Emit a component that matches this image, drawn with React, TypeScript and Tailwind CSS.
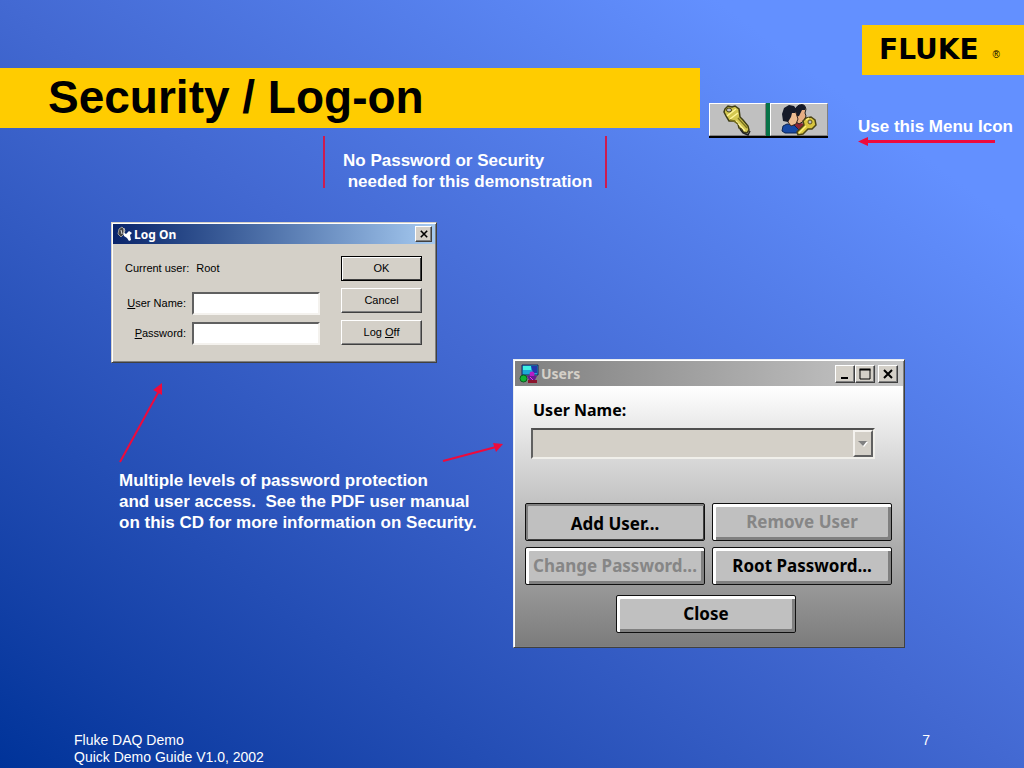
import type { ReactNode } from "react";

function Arrow({ className, viewBox, line, head, width = 2 }: {
  className: string;
  viewBox: string;
  line: string;
  head: string;
  width?: number;
}) {
  return (
    <svg className={className} viewBox={viewBox} fill="none" aria-hidden="true">
      <path d={line} stroke="#ee0a3c" strokeWidth={width} />
      <path d={head} fill="#ee0a3c" />
    </svg>
  );
}

function KeyIcon() {
  return (
    <svg className="w-8 h-8" viewBox="0 0 32 32" aria-hidden="true">
      <path
        d="M3 5L6 2L10 3L13 2L17 5L18 13L21 16L26 22L27 26L25 29L21 28L20 25L17 24L16 20L12 17L7 17L4 12L2 8Z"
        fill="#d3c750"
        stroke="#3e3c14"
        strokeWidth="1.5"
      />
      <path d="M5 12L14 5M8 15L16 9M14 17L23 27" stroke="#fff59a" strokeWidth="1.4" />
      <path d="M16 14L25 24M8 16L12 17L16 20" stroke="#7b731f" strokeWidth="1.4" fill="none" />
      <ellipse cx="7" cy="6" rx="2.500" ry="2" fill="#c0c0c0" stroke="#3e3c14" />
      <path d="M18 25L21 29L26 31L28 27" stroke="#222" fill="none" strokeWidth="1.500" />
    </svg>
  );
}

function UsersKeyIcon() {
  return (
    <svg className="w-9 h-8" viewBox="0 0 36 32" aria-hidden="true">
      <path d="M11 21L17 18L23 20L22 28H11Z" fill="#8c2635" />
      <path d="M14 5L18 1H23L25 5L24 9L25 12L23 17L18 20L14 17Z" fill="#e6ae83" stroke="#222" />
      <path d="M13 7L16 2L21 0L25 3L24 6L21 6L18 12L14 13Z" fill="#151a28" />
      <path d="M1 27L2 22L6 20L13 21L19 27L17 29H4Z" fill="#1749a5" stroke="#0b2457" />
      <path d="M5 9L14 6L16 12L17 15L15 20L10 22L7 18Z" fill="#edbd91" stroke="#3b2820" />
      <path d="M1 10L3 4L8 1L13 2L16 6L14 9L11 9L10 13L7 18L2 17Z" fill="#151a28" />
      <path
        d="M25 14L30 13L34 16L35 21L31 25L27 25L22 30L17 31L16 28L23 21L22 17Z"
        fill="#d9c63e"
        stroke="#4c4515"
        strokeWidth="1.5"
      />
      <circle cx="29" cy="18" r="2" fill="#c0c0c0" stroke="#5d5219" />
      <path d="M18 29L25 22M25 16L28 14" stroke="#fff17c" strokeWidth="1.4" />
    </svg>
  );
}

function KeysTitleIcon() {
  return (
    <svg className="w-4 h-4" viewBox="0 0 16 16" aria-hidden="true">
      <path d="M2 3L5 1L8 4L7 8L4 11L1 8Z" fill="#454545" stroke="#999" />
      <path d="M4 4L5 8M7 2V6" stroke="#ddd" />
      <path d="M6 6L9 8L12 5L15 7L13 9L14 14L12 15L10 12L7 10Z" fill="#fff" />
    </svg>
  );
}

function UsersTitleIcon() {
  return (
    <svg className="w-5 h-5" viewBox="0 0 20 20" aria-hidden="true">
      <path d="M3 1H19V11H3Z" fill="#1ca9d6" stroke="#16215f" />
      <path d="M4 2H12V6H4Z" fill="#3ff0e5" />
      <path d="M12 2H18V9H14Z" fill="#2338ab" />
      <circle cx="4.500" cy="14.500" r="3.500" fill="#12b535" stroke="#075b1c" />
      <circle cx="13" cy="10" r="2.500" fill="#b51ac8" />
      <path d="M8 12H18L16 16H10Z" fill="#681a93" />
      <path d="M9 16H18V19H9Z" fill="#8c142d" />
      <path d="M11 13L14 16" stroke="#ef3bdf" />
    </svg>
  );
}

function CaptionButton({ label, className, children }: {
  label: string;
  className: string;
  children: ReactNode;
}) {
  return (
    <button
      type="button"
      aria-label={label}
      className={`flex items-center justify-center bg-[#d4d0c8] border border-t-white border-l-white border-r-[#404040] border-b-[#404040] shadow-[inset_-1px_-1px_0_#808080] ${className}`}
    >
      {children}
    </button>
  );
}

function CloseGlyph({ className }: { className: string }) {
  return (
    <svg className={className} viewBox="0 0 10 10" aria-hidden="true">
      <path d="M1 1L9 9M9 1L1 9" stroke="#000" strokeWidth="2" />
    </svg>
  );
}

const dialogButton =
  "w-[81px] h-[25px] bg-[#d4d0c8] border border-t-white border-l-white border-r-[#404040] border-b-[#404040] shadow-[inset_-1px_-1px_0_#808080]";

const dialogInput =
  "w-32 h-[23px] px-1 bg-white border-2 border-t-[#606060] border-l-[#606060] border-r-[#f4f2ee] border-b-[#f4f2ee] outline-none";

function LogOnDialog() {
  return (
    <section
      aria-label="Log On"
      className="w-[326px] h-[141px] bg-[#d4d0c8] border border-t-[#d4d0c8] border-l-[#d4d0c8] border-r-[#404040] border-b-[#404040] shadow-[inset_1px_1px_0_#fff,inset_-1px_-1px_0_#808080] p-px text-[11px] leading-[13px] text-black"
    >
      <div className="flex items-center h-5 pl-1 pr-[3px] bg-linear-to-r from-[#0a246a] to-[#a6caf0]">
        <KeysTitleIcon />
        <h2 className="ml-px grow font-['Noto_Sans',sans-serif] text-[12px] font-bold text-white">Log On</h2>
        <CaptionButton label="Close" className="w-[17px] h-4">
          <CloseGlyph className="w-2 h-2" />
        </CaptionButton>
      </div>
      <form className="flex justify-between pl-3 pr-[13px] pt-3" onSubmit={(e) => e.preventDefault()}>
        <div>
          <div className="flex items-center h-[25px] mb-[11px] gap-[7px] whitespace-nowrap">
            <span>Current user:</span>
            <span>Root</span>
          </div>
          <div className="flex items-center gap-1.5 mb-[7px]">
            <label htmlFor="logon-user" className="w-[61px] text-right whitespace-nowrap">
              <u>U</u>ser Name:
            </label>
            <input id="logon-user" type="text" className={dialogInput} />
          </div>
          <div className="flex items-center gap-1.5">
            <label htmlFor="logon-password" className="w-[61px] text-right whitespace-nowrap">
              <u>P</u>assword:
            </label>
            <input id="logon-password" type="password" className={dialogInput} />
          </div>
        </div>
        <div className="flex flex-col gap-[7px]">
          <button
            type="submit"
            className="w-[81px] h-[25px] bg-[#d4d0c8] border border-black shadow-[inset_1px_1px_0_#fff,inset_-1px_-1px_0_#404040]"
          >
            OK
          </button>
          <button type="button" className={dialogButton}>Cancel</button>
          <button type="button" className={dialogButton}>
            Log <u>O</u>ff
          </button>
        </div>
      </form>
    </section>
  );
}

const panelButton =
  "w-[180px] h-[38px] rounded-[2px] border border-[#101010] bg-[#c0c0c0] whitespace-nowrap shadow-[inset_3px_3px_0_#fff,inset_-3px_-3px_0_#808080] disabled:text-[#868686]";

function UsersWindow() {
  return (
    <section
      aria-label="Users"
      className="w-[392px] h-[289px] flex flex-col bg-[#d4d0c8] border border-t-[#e8ecf0] border-l-[#e8ecf0] border-r-[#404040] border-b-[#404040] shadow-[inset_1px_1px_0_#fff,inset_-1px_-1px_0_#808080] p-px font-['Noto_Sans',sans-serif] text-[17px] leading-5 font-bold text-black"
    >
      <div className="flex items-center h-[25px] shrink-0 pl-1 pr-[5px] bg-linear-to-r from-[#808080] to-[#c8c8c8]">
        <UsersTitleIcon />
        <h2 className="ml-0.5 grow text-[14px] text-[#d4d0c8]">Users</h2>
        <CaptionButton label="Minimize" className="w-5 h-[18px]">
          <svg className="w-3 h-3" viewBox="0 0 12 12" aria-hidden="true">
            <path d="M2 10H9" stroke="#000" strokeWidth="2" />
          </svg>
        </CaptionButton>
        <CaptionButton label="Maximize" className="w-5 h-[18px] mr-[3px]">
          <svg className="w-3 h-3" viewBox="0 0 12 12" aria-hidden="true">
            <path d="M1 1.500H11V11H1Z" stroke="#000" fill="none" />
            <path d="M0.500 1.500H11.500" stroke="#000" strokeWidth="2" />
          </svg>
        </CaptionButton>
        <CaptionButton label="Close" className="w-5 h-[18px]">
          <CloseGlyph className="w-2.5 h-2.5" />
        </CaptionButton>
      </div>
      <form
        className="grow flex flex-col px-2.5 pt-3.5 pb-[13px] bg-linear-to-b from-white to-[#7c7c7c]"
        onSubmit={(e) => e.preventDefault()}
      >
        <label htmlFor="users-name" className="pl-2 text-[16px]">User Name:</label>
        <div className="flex h-[31px] mt-2 ml-1.5 mr-[18px] bg-[#d4d0c8] border-2 border-t-[#505050] border-l-[#606060] border-r-[#f0efea] border-b-[#f0efea]">
          <select id="users-name" disabled className="grow min-w-0 appearance-none bg-transparent">
            <option></option>
          </select>
          <span className="flex items-center justify-center w-5 border-2 border-t-[#f4f2ee] border-l-[#f4f2ee] border-r-[#606060] border-b-[#606060]">
            <svg className="w-2.5 h-1.5" viewBox="0 0 10 6" aria-hidden="true">
              <path d="M1 1H10L6 6Z" fill="#fff" />
              <path d="M0 0H9L5 5Z" fill="#808080" />
            </svg>
          </span>
        </div>
        <div className="mt-auto flex flex-wrap gap-x-[7px] gap-y-1.5">
          <button
            type="button"
            className="w-[180px] h-[38px] pt-1 rounded-[2px] border border-[#101010] bg-[#c0c0c0] shadow-[inset_2px_2px_0_#808080,inset_-1px_-1px_0_#404040]"
          >
            Add User...
          </button>
          <button type="button" disabled className={panelButton}>Remove User</button>
          <button type="button" disabled className={panelButton}>Change Password...</button>
          <button type="button" className={panelButton}>Root Password...</button>
        </div>
        <div className="mt-2.5 pr-1.5 flex justify-center">
          <button type="button" className={panelButton}>Close</button>
        </div>
      </form>
    </section>
  );
}

export default function App() {
  return (
    <div className="min-h-screen flex flex-col overflow-hidden bg-linear-to-tr from-[#003399] via-[#4369d2] via-50% to-[#6390ff] to-85% font-['Liberation_Sans',Arial,sans-serif] text-white">
      <header className="flex h-[222px]">
        <div className="grow pt-[68px]">
          <h1 className="h-[60px] pl-12 bg-[#ffcc00] text-[46px] leading-[58px] font-bold text-black whitespace-nowrap">
            Security / Log-on
          </h1>
          <p className="w-[284px] h-[52px] mt-2 ml-[323px] pl-[18px] pt-3.5 border-x-2 border-[#cc1c50] text-[17px] leading-[21px] font-bold whitespace-pre">
            {"No Password or Security\n needed for this demonstration"}
          </p>
        </div>

        <div className="w-[324px] shrink-0 flex flex-col pt-[25px]">
          <div className="self-end flex items-center w-[162px] h-[50px] pl-[17px] gap-3.5 bg-[#ffcc00] text-black">
            <span className="font-['DejaVu_Sans',sans-serif] text-[28px] leading-[50px] font-bold">FLUKE</span>
            <span className="pt-2 text-[10px]">®</span>
          </div>
          <div className="flex items-start mt-7 pl-[9px]">
            <div className="flex h-[35px] shrink-0 bg-[#087348] border-b-2 border-black">
              <button
                type="button"
                aria-label="Log on"
                className="flex items-center justify-center w-[57px] bg-[#c0c0c0] border border-t-white border-l-white border-r-[#808080] border-b-[#808080]"
              >
                <KeyIcon />
              </button>
              <button
                type="button"
                aria-label="Users"
                className="flex items-center justify-center w-[58px] ml-1 bg-[#c0c0c0] border border-t-white border-l-white border-r-[#808080] border-b-[#808080]"
              >
                <UsersKeyIcon />
              </button>
            </div>
            <div className="ml-[30px] pt-[13px]">
              <p className="text-[17px] leading-[21px] font-bold whitespace-nowrap">Use this Menu Icon</p>
              <Arrow
                className="w-[137px] h-2.5"
                viewBox="0 0 137 10"
                line="M8 4.500H137"
                head="M0 4.500L10 0V9Z"
                width={3}
              />
            </div>
          </div>
        </div>
      </header>

      <main className="flex grow">
        <div className="w-[513px] shrink-0">
          <div className="pl-[111px]">
            <LogOnDialog />
          </div>
          <div className="flex items-end justify-between mt-5 pl-[119px] pr-[9px]">
            <Arrow
              className="w-[45px] h-20"
              viewBox="0 0 45 80"
              line="M1 79L40 8"
              head="M43 0L43 12L34 7Z"
            />
            <Arrow
              className="w-[62px] h-5"
              viewBox="0 0 62 20"
              line="M1 18L54 4"
              head="M61 1L54 9L51 0Z"
            />
          </div>
          <p className="mt-[7px] pl-[119px] text-[17px] leading-[21px] font-bold whitespace-pre">
            {"Multiple levels of password protection\nand user access.  See the PDF user manual\non this CD for more information on Security."}
          </p>
        </div>
        <div className="pt-[137px]">
          <UsersWindow />
        </div>
      </main>

      <footer className="flex justify-between pl-[74px] pr-[94px] pb-0.5 text-[14px] leading-[17px]">
        <p>
          Fluke DAQ Demo
          <br />
          Quick Demo Guide V1.0, 2002
        </p>
        <p>7</p>
      </footer>
    </div>
  );
}
